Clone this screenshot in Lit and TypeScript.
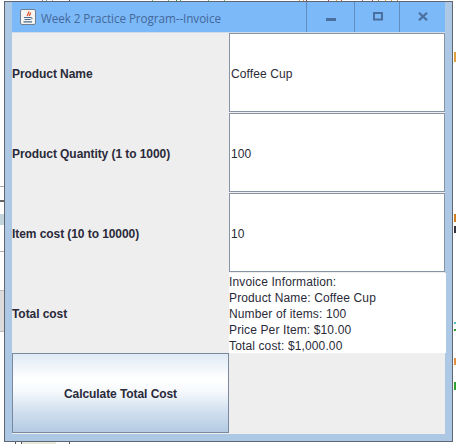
import { LitElement, html, css } from "lit";
import { customElement } from "lit/decorators.js";

const topTicks: [number, string][] = [
  [42, "#8a7ab0"], [46, "#6a9ac0"], [52, "#b0b0b0"], [69, "#555"], [152, "#70b070"], [168, "#70b070"],
  [176, "#30a030"], [180, "#30b060"], [208, "#70b070"], [224, "#70b070"], [299, "#e09040"], [303, "#e0a040"],
  [306, "#c04040"], [328, "#c04060"], [336, "#e0a040"], [341, "#d06040"], [362, "#c06080"], [372, "#c04060"],
  [378, "#c08040"], [385, "#e0a040"], [391, "#e0a040"], [397, "#e09040"],
];
const rightMarks: [number, number, string][] = [
  [52, 10, "#e0a040"], [214, 8, "#d08020"], [226, 7, "#334"], [322, 2, "#50c0c0"], [329, 2, "#30a030"],
  [358, 7, "#e09040"], [382, 8, "#30a030"],
];

@customElement("app-root")
export class AppRoot extends LitElement {
  static styles = css`
    :host { display: block; width: 458px; height: 444px; background: #fff; position: relative; overflow: hidden;
      font-family: "Liberation Sans", Arial, sans-serif; font-size: 12px; color: #2a2a38; }
    .tick { position: absolute; top: 0; width: 1px; height: 2px; }
    .mark { position: absolute; left: 454px; width: 2px; }
    .scrap { position: absolute; background: #aaa; }
    .scrap-box { position: absolute; left: 0; top: 290px; width: 4px; height: 42px; background: #dcdcdc; border-top: 1px solid #bbb; border-bottom: 1px solid #bbb; box-sizing: border-box; }
    .page { padding: 1px 5px 3px 4px; height: 444px; box-sizing: border-box; }
    .window { height: 441px; box-sizing: border-box; border: 1px solid #5f6670; background: #adc8e4; padding: 0 7px 7px 7px; position: relative; display: flex; flex-direction: column; }
    .titlebar { height: 30px; flex: none; background: #7cb9f8; display: flex; align-items: stretch; box-sizing: border-box; }
    .title { flex: 1; display: flex; align-items: center; gap: 5px; padding-left: 8px; font-family: "Open Sans", "Noto Sans", sans-serif; font-size: 11.7px; color: #44689a; letter-spacing: -0.07px; padding-top: 1px; box-sizing: border-box; white-space: nowrap; font-variant-ligatures: none; }
    .appicon { width: 16px; height: 16px; flex: none; margin-top: -1px; }
    .wbtn { display: flex; align-items: center; justify-content: center; border-left: 1px solid #5f8dbf; box-sizing: border-box; }
    .wbtn svg { display: block; }
    .min { width: 48px; } .max { width: 45px; padding-left: 1px; } .close { width: 46px; padding-left: 1px; }
    .content { flex: 1; min-height: 0; background: #eeeeee; display: grid; grid-template-columns: 217px 217px; grid-template-rows: 80px 80px 80px 80px 80px; border-top: 1px solid #d0dce8; box-sizing: border-box; }
    .label { display: flex; align-items: center; font-weight: bold; color: #2a2a3a; letter-spacing: -0.07px; padding-top: 2px; box-sizing: border-box; }
    .field { background: #fff; border: 1px solid #8794a3; margin-right: 1px; box-sizing: border-box; display: flex; align-items: center; padding: 3px 0 0 1px; margin-bottom: 1px; letter-spacing: 0.1px; }
    .area { background: #fff; line-height: 16px; padding-top: 1px; box-sizing: border-box; white-space: pre; letter-spacing: 0.13px; }
    .calc { font: bold 12px "Liberation Sans", Arial, sans-serif; letter-spacing: -0.07px; color: #2a2a3a; border: 1px solid #7a8a9e; padding: 2px 0 0; margin: 0;
      background: linear-gradient(#dfeaf5 0%, #ffffff 32%, #f6f9fc 48%, #cfdeee 75%, #b4cbe3 100%); }
  `;

  render() {
    return html`
      ${topTicks.map(([x, c]) => html`<i class="tick" style="left:${x}px;background:${c}"></i>`)}
      ${rightMarks.map(([y, h, c]) => html`<i class="mark" style="top:${y}px;height:${h}px;background:${c}"></i>`)}
      <i class="scrap" style="left:0;top:186px;width:4px;height:1px"></i>
      <i class="scrap" style="left:0;top:200px;width:4px;height:2px;background:#666"></i>
      <i class="scrap" style="left:0;top:214px;width:4px;height:11px;background:#c4d4dc"></i>
      <i class="scrap" style="left:0;top:251px;width:4px;height:1px"></i>
      <div class="scrap-box"></div>
      <i class="scrap" style="left:15px;top:441px;width:1px;height:3px;background:#555"></i>
      <i class="scrap" style="left:21px;top:441px;width:1px;height:3px;background:#555"></i>
      <i class="scrap" style="left:22px;top:441px;width:34px;height:3px;background:#e8e8e0"></i>
      <i class="scrap" style="left:69px;top:441px;width:1px;height:3px;background:#555"></i>
      <div class="page">
        <div class="window">
          <div class="titlebar">
            <div class="title">
              <svg class="appicon" viewBox="0 0 16 16">
                <rect x="0.5" y="0.5" width="15" height="15" rx="1.5" fill="#f4f4f0" stroke="#6f7f90"/>
                <path d="M8.5 2.5 C10 4 6.5 5 7.5 7 M10.5 3.5 C11 5 9 5.5 9.5 7" fill="none" stroke="#e0522a" stroke-width="1.3"/>
                <path d="M4 8.5 H11 M4.5 10.5 H10.5 M3.5 12.8 H12" fill="none" stroke="#4a6a90" stroke-width="1.2"/>
                <path d="M11 8.5 Q13.5 9 11 10.5" fill="none" stroke="#4a6a90"/>
              </svg>
              <span>Week 2 Practice Program--Invoice</span>
            </div>
            <div class="wbtn min"><svg width="10" height="10" viewBox="0 0 10 10" style="margin-top:3px"><rect x="0" y="4" width="10" height="3" fill="#4a6f9e"/></svg></div>
            <div class="wbtn max"><svg width="10" height="9" viewBox="0 0 10 9" style="margin-top:-2px"><rect x="1" y="1" width="8" height="6.5" fill="none" stroke="#4a6f9e" stroke-width="2"/></svg></div>
            <div class="wbtn close"><svg width="10" height="9" viewBox="0 0 10 9" style="margin-top:-2px"><path d="M1 0.8 L9 8.2 M9 0.8 L1 8.2" stroke="#4a6f9e" stroke-width="2.2"/></svg></div>
          </div>
          <div class="content">
            <div class="label">Product Name</div>
            <div class="field">Coffee Cup</div>
            <div class="label">Product Quantity (1 to 1000)</div>
            <div class="field">100</div>
            <div class="label">Item cost (10 to 10000)</div>
            <div class="field">10</div>
            <div class="label">Total cost</div>
            <div class="area"><div>Invoice Information:</div><div>Product Name: Coffee Cup</div><div>Number of items: 100</div><div>Price Per Item: $10.00</div><div>Total cost: $1,000.00</div></div>
            <button class="calc">Calculate Total Cost</button>
            <div></div>
          </div>
        </div>
      </div>
    `;
  }
}
